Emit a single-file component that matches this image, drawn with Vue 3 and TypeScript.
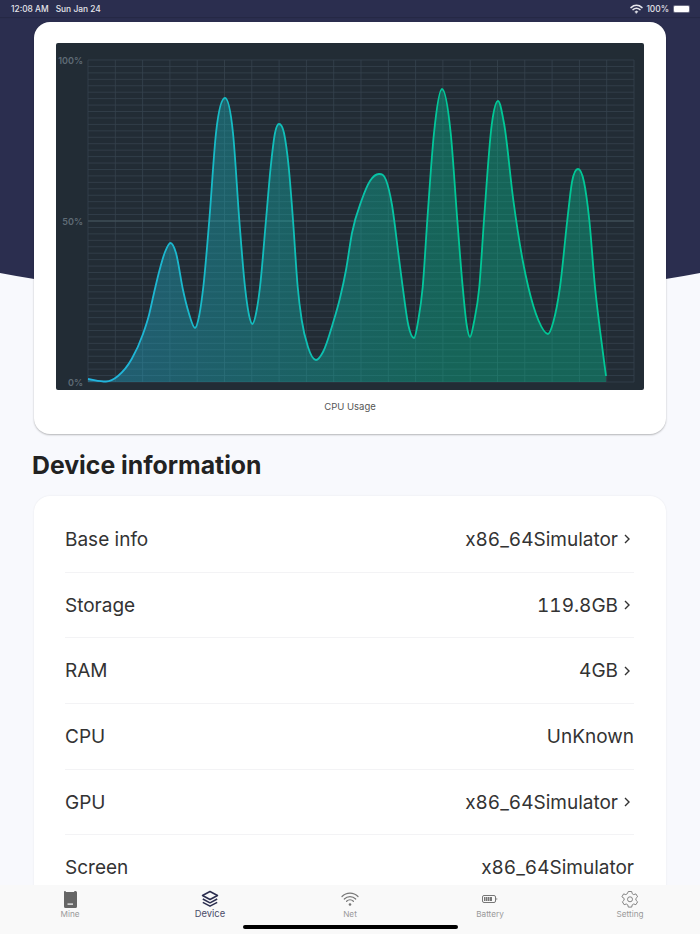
<template>
  <div class="app">
    <div class="hero"></div>

    <header class="status-bar">
      <div class="status-left">
        <span>12:08 AM</span>
        <span>Sun Jan 24</span>
      </div>
      <div class="status-right">
        <svg width="13" height="10" viewBox="0 0 13 10" fill="none" stroke="#e8e8ee" stroke-linecap="round">
          <path d="M1 3.6C4.3.6 8.7.6 12 3.6" stroke-width="1.5" />
          <path d="M3 5.6C5.1 3.9 7.9 3.9 10 5.6" stroke-width="1.5" />
          <path d="M5.2 7.6 6.5 6.9 7.8 7.6 6.5 9.2Z" fill="#e8e8ee" stroke-width=".6" />
        </svg>
        <span>100%</span>
        <span class="battery"><span class="battery-level"></span></span>
      </div>
    </header>

    <main class="content">
      <section class="card chart-card">
        <div class="chart">
          <svg width="588" height="347" viewBox="0 0 588 347">
            <defs>
              <linearGradient id="lineGrad" gradientUnits="userSpaceOnUse" x1="32" y1="0" x2="400" y2="0">
                <stop offset="0" stop-color="#23b4e0" />
                <stop offset="1" stop-color="#00c896" />
              </linearGradient>
              <linearGradient id="fillGrad" gradientUnits="userSpaceOnUse" x1="32" y1="0" x2="400" y2="0">
                <stop offset="0" stop-color="#23b4e0" stop-opacity=".36" />
                <stop offset="1" stop-color="#00c896" stop-opacity=".36" />
              </linearGradient>
            </defs>
            <line v-for="y in hLines" :key="'h' + y" x1="32" x2="578" :y1="y" :y2="y" class="grid-line" />
            <line v-for="x in vLines" :key="'v' + x" :x1="x" :x2="x" y1="17" y2="339" class="grid-line" />
            <line x1="32" x2="578" y1="178" y2="178" class="mid-line" />
            <path :d="areaPath" fill="url(#fillGrad)" />
            <path :d="linePath" fill="none" stroke="url(#lineGrad)" stroke-width="1.8" />
            <text x="27" y="20.5" class="axis-label">100%</text>
            <text x="27" y="181.5" class="axis-label">50%</text>
            <text x="27" y="342.5" class="axis-label">0%</text>
          </svg>
        </div>
        <div class="chart-title">CPU Usage</div>
      </section>

      <h2 class="section-title">Device information</h2>

      <section class="card info-card">
        <div v-for="row in rows" :key="row.label" class="info-row">
          <span>{{ row.label }}</span>
          <span class="info-value">
            {{ row.value }}
            <svg v-if="row.link" width="6" height="10" viewBox="0 0 6 10" fill="none" stroke="#333" stroke-width="1.4" class="chevron">
              <path d="M1 1 5 5 1 9" />
            </svg>
          </span>
        </div>
      </section>
    </main>

    <nav class="tab-bar">
      <div class="tab">
        <svg width="16" height="18" viewBox="0 0 16 18">
          <path d="M2.5 1h1.200v1h8.600V1h1.200A1.500 1.500 0 0 1 15 2.500v14a1.500 1.500 0 0 1-1.500 1.500h-10A1.500 1.500 0 0 1 2 16.500v-14A1.500 1.500 0 0 1 2.500 1Z" fill="#666" />
          <rect x="5.500" y="13.500" width="5.500" height="1.200" fill="#fff" />
        </svg>
        <span>Mine</span>
      </div>
      <div class="tab active">
        <svg width="18" height="18" viewBox="0 0 18 18" fill="none" stroke="#2b2e4f" stroke-width="1.500" stroke-linejoin="round">
          <path d="M9 1.500 16.500 5.500 9 9.500 1.500 5.500Z" />
          <path d="M1.800 9 9 12.800 16.200 9" />
          <path d="M1.800 12.300 9 16.200 16.200 12.300" />
        </svg>
        <span>Device</span>
      </div>
      <div class="tab">
        <svg width="18" height="18" viewBox="0 0 18 18" fill="none" stroke="#777" stroke-width="1.200" stroke-linecap="round">
          <path d="M1 6.500C5.500 2 12.500 2 17 6.500" />
          <path d="M3.300 9C6.500 5.800 11.500 5.800 14.700 9" />
          <path d="M5.600 11.300C7.500 9.500 10.500 9.500 12.400 11.300" />
          <circle cx="9" cy="14.500" r="1.300" fill="#777" stroke="none" />
        </svg>
        <span>Net</span>
      </div>
      <div class="tab">
        <svg width="18" height="18" viewBox="0 0 18 18" fill="none">
          <rect x="1.500" y="5.500" width="13" height="7" rx="1.500" stroke="#777" />
          <rect x="3" y="7" width="8" height="4" fill="#777" />
          <path d="M4.500 7v4M6.500 7v4M8.500 7v4" stroke="#f9f9f9" stroke-width=".5" />
          <path d="M15.500 7.800a1.300 1.300 0 0 1 0 2.400Z" fill="#777" />
        </svg>
        <span>Battery</span>
      </div>
      <div class="tab">
        <svg width="18" height="18" viewBox="0 0 18 18" fill="none" stroke="#777" stroke-width=".9" stroke-linejoin="round">
          <path d="M7.300 1.500h3.400l.5 2.200 1.500.9 2.200-.7 1.700 2.900-1.700 1.600v1.800l1.700 1.600-1.700 2.900-2.200-.7-1.500.9-.5 2.200H7.300l-.5-2.200-1.500-.9-2.200.7-1.700-2.900 1.700-1.600V8.400L.9 6.800l1.700-2.900 2.200.7 1.500-.9Z" />
          <circle cx="9" cy="9.300" r="2.500" />
        </svg>
        <span>Setting</span>
      </div>
      <div class="home-indicator"></div>
    </nav>
  </div>
</template>

<script setup lang="ts">
type Pt = [number, number]

const rows = [
  { label: 'Base info', value: 'x86_64Simulator', link: true },
  { label: 'Storage', value: '119.8GB', link: true },
  { label: 'RAM', value: '4GB', link: true },
  { label: 'CPU', value: 'UnKnown', link: false },
  { label: 'GPU', value: 'x86_64Simulator', link: true },
  { label: 'Screen', value: 'x86_64Simulator', link: false }
]

const hLines = Array.from({ length: 51 }, (_, i) => 17 + i * 6.44)
const vLines = Array.from({ length: 21 }, (_, i) => 32 + i * 27.3)

// points are read off the reference, in page px, shifted to the chart's origin below
const raw: Pt[] = [
  [88, 379], [106, 381.5], [118, 376], [131.7, 359], [143, 334], [149, 315], [154, 293], [159.3, 271], [165, 252], [170.5, 243],
  [176, 253], [183, 290], [188.5, 312], [195, 328], [199.3, 315], [203.3, 287], [209.3, 220], [216, 133],
  [225, 98], [233, 133], [239.3, 220], [245, 287], [249, 315], [252.3, 324], [256.7, 310], [260, 287],
  [266, 220], [270.7, 167], [275, 133], [279, 124], [284, 133], [288.7, 167], [293, 220], [297.7, 287],
  [301.7, 320], [308, 347], [316, 360], [323, 352], [333, 323], [340, 298], [346, 270], [352, 233],
  [361.7, 200], [370, 181], [379, 174], [386, 180], [392, 205], [398.3, 253], [402.7, 287], [408.3, 325],
  [414, 338], [418.3, 320], [422.7, 287], [427.3, 220], [434, 133], [442, 89], [450.7, 133], [457.3, 220],
  [462.7, 287], [466.7, 325], [470, 337], [474, 322], [479.3, 287], [484, 220], [491.7, 125], [498, 101],
  [504.3, 125], [513.3, 200], [523, 262], [528.3, 287], [538.3, 320], [548, 334], [553.3, 322], [560, 287],
  [567.3, 220], [572, 182], [578, 169], [584, 182], [589.3, 220], [595, 287], [600, 330], [606, 376]
]
const pts: Pt[] = raw.map(([x, y]) => [x - 56, y - 43])

// local minima and maxima get a flat tangent
const isExtreme = (p: Pt[], i: number) => (p[i][1] - p[i - 1][1]) * (p[i + 1][1] - p[i][1]) <= 0

function curve(p: Pt[]): string {
  const n = p.length
  const d = p.slice(1).map((q, i) => (q[1] - p[i][1]) / (q[0] - p[i][0]))
  const m = p.map((q, i) => {
    if (i === 0) return d[0]
    if (i === n - 1) return d[n - 2]
    if (isExtreme(p, i)) return 0
    const h0 = q[0] - p[i - 1][0]
    const h1 = p[i + 1][0] - q[0]
    return (d[i - 1] * h1 + d[i] * h0) / (h0 + h1)
  })
  let s = `M${p[0][0]} ${p[0][1]}`
  for (let i = 0; i < n - 1; i++) {
    const h = (p[i + 1][0] - p[i][0]) / 3
    s += `C${p[i][0] + h} ${p[i][1] + m[i] * h} ${p[i + 1][0] - h} ${p[i + 1][1] - m[i + 1] * h} ${p[i + 1][0]} ${p[i + 1][1]}`
  }
  return s
}

const linePath = curve(pts)
const areaPath = `${linePath}L${pts[pts.length - 1][0]} 339L${pts[0][0]} 339Z`
</script>

<style scoped>
.app {
  position: relative;
  width: 700px;
  height: 934px;
  overflow: hidden;
  display: flex;
  flex-direction: column;
  background: #f8f9fd;
  font-family: Inter, "Noto Sans", sans-serif;
  color: #222;
}

.hero {
  position: absolute;
  left: -150px;
  top: 0;
  width: 1000px;
  height: 301px;
  background: #2b2e4f;
  border-radius: 0 0 50% 50% / 0 0 98px 98px;
}

.status-bar {
  position: relative;
  height: 17px;
  flex: none;
  display: flex;
  justify-content: space-between;
  align-items: center;
  padding: 0 10px 0 11px;
  font-size: 8.4px;
  font-weight: 500;
  color: #e4e4ea;
  box-shadow: 0 1px 1px rgba(0, 0, 0, 0.12);
}

.status-left {
  display: flex;
  gap: 7px;
}

.status-right {
  display: flex;
  align-items: center;
  gap: 3px;
}

.battery {
  width: 17px;
  height: 8px;
  padding: 1px;
  box-sizing: border-box;
  border-radius: 2px;
  background: rgba(255, 255, 255, 0.3);
  margin-left: 1px;
  display: block;
}

.battery-level {
  display: block;
  height: 100%;
  background: #fff;
  border-radius: 1px;
}

.content {
  position: relative;
  flex: 1;
  min-height: 0;
  overflow: hidden;
  padding-top: 5px;
}

.card {
  margin: 0 34px;
  background: #fff;
  border-radius: 16px;
}

.chart-card {
  height: 412px;
  box-sizing: border-box;
  padding: 21px 22px 0;
  box-shadow: 0 1px 2px rgba(0, 0, 0, 0.28);
}

.chart {
  height: 347px;
  background: #222c35;
  border-radius: 2px;
  overflow: hidden;
}

.chart svg {
  display: block;
}

.grid-line {
  stroke: #36434e;
  stroke-width: 0.8;
}

.mid-line {
  stroke: #46565f;
  stroke-width: 1.2;
}

.axis-label {
  fill: #5f6b75;
  font-size: 9px;
  font-weight: 600;
  text-anchor: end;
}

.chart-title {
  margin-top: 11px;
  text-align: center;
  font-size: 9.5px;
  line-height: 12px;
  color: #555;
}

.section-title {
  margin: 17px 32px 16px;
  font-size: 24.8px;
  line-height: 29px;
  font-weight: 700;
  color: #222;
}

.info-card {
  padding: 11px 32px 0 31px;
  box-shadow: 0 0 2px rgba(0, 0, 0, 0.08);
}

.info-row {
  height: 65.7px;
  box-sizing: border-box;
  border-bottom: 1px solid #f3f3f5;
  display: flex;
  justify-content: space-between;
  align-items: center;
  font-size: 19px;
  color: #333;
}

.info-value {
  display: flex;
  align-items: center;
  font-variant-numeric: tabular-nums;
}

.chevron {
  margin: 0 4px 0 6px;
}

.tab-bar {
  position: relative;
  flex: none;
  height: 49px;
  display: flex;
  background: #f9f9f9;
}

.tab {
  flex: 1;
  display: flex;
  flex-direction: column;
  align-items: center;
  padding-top: 5px;
  font-size: 8.2px;
  line-height: 11px;
  color: #999;
}

.tab svg {
  display: block;
  margin-bottom: 1px;
}

.tab.active {
  font-size: 9.4px;
  color: #4a4c69;
}

.tab.active svg {
  margin-bottom: 0;
}

.home-indicator {
  position: absolute;
  left: 243px;
  bottom: 5px;
  width: 215px;
  height: 4px;
  border-radius: 2px;
  background: #000;
}
</style>
